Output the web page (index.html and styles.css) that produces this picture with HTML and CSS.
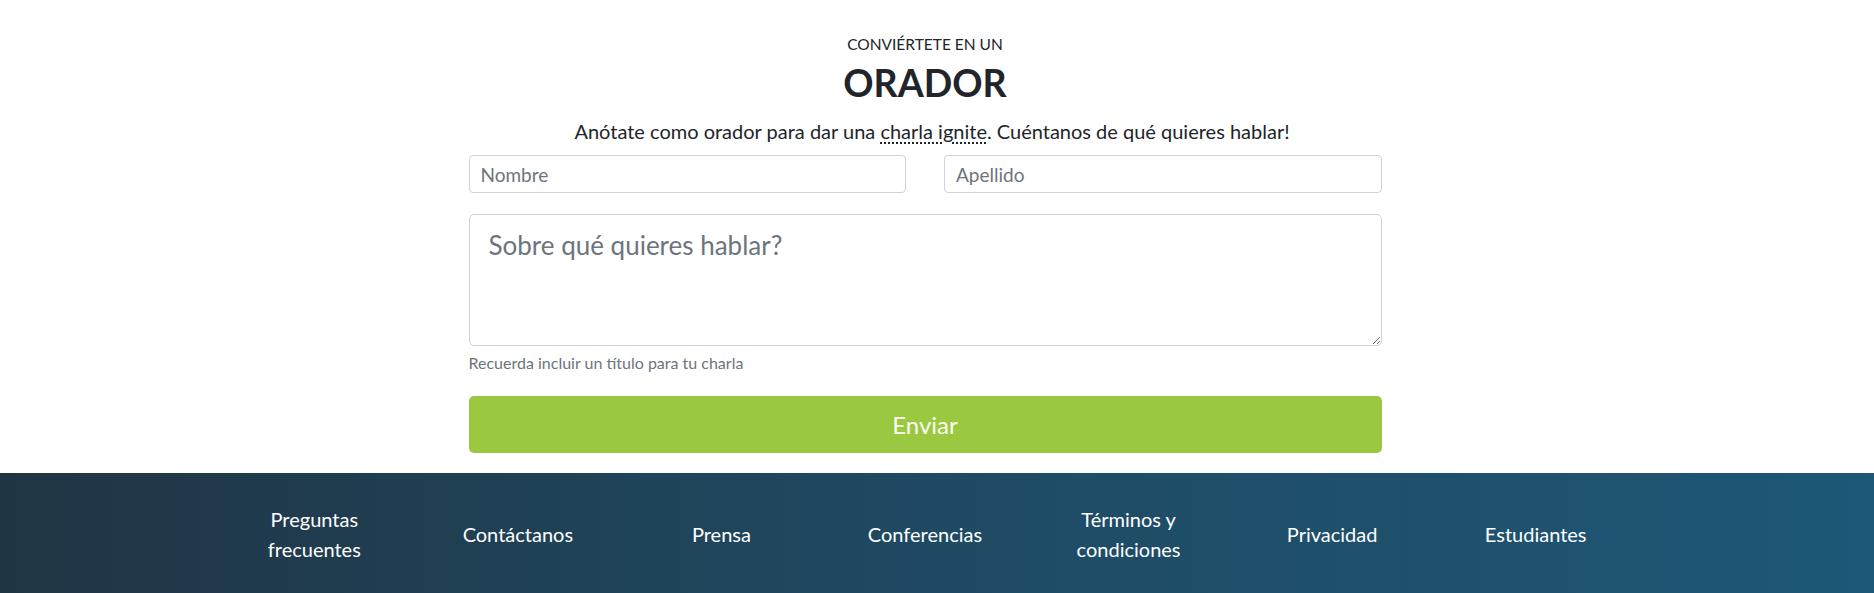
FILE: index.html
```html
<!DOCTYPE html>
<html lang="es">
<head>
<meta charset="utf-8">
<title>Conviértete en un orador</title>
<link rel="stylesheet" href="styles.css">
</head>
<body>
<main class="page">
  <section class="speaker">
    <p class="kicker">CONVIÉRTETE EN UN</p>
    <h1 class="title">ORADOR</h1>
    <p class="lead">Anótate como orador para dar una <abbr title="charla ignite">charla ignite</abbr>. Cuéntanos de qué quieres hablar!</p>
    <form class="form">
      <div class="row">
        <input class="field" type="text" placeholder="Nombre">
        <input class="field" type="text" placeholder="Apellido">
      </div>
      <textarea class="area" placeholder="Sobre qué quieres hablar?"></textarea>
      <small class="hint">Recuerda incluir un título para tu charla</small>
      <button class="send" type="button">Enviar</button>
    </form>
  </section>
</main>
<footer class="footer">
  <nav class="links">
    <a href="#">Preguntas frecuentes</a>
    <a href="#">Contáctanos</a>
    <a href="#">Prensa</a>
    <a href="#">Conferencias</a>
    <a href="#">Términos y condiciones</a>
    <a href="#">Privacidad</a>
    <a href="#">Estudiantes</a>
  </nav>
</footer>
</body>
</html>
```

FILE: styles.css
```css
* { box-sizing: border-box; }
html, body { margin: 0; padding: 0; }
body {
  font-family: Lato, "Open Sans", "Liberation Sans", sans-serif;
  color: #212529;
  background: #fff;
}
.page {
  padding-right: 24px;
}
.speaker {
  width: 913px;
  margin: 0 auto;
  padding-top: 32px;
  text-align: center;
}
.kicker {
  margin: 0;
  font-size: 15.5px;
  line-height: 24px;
}
.title {
  margin: 3px 0 0;
  font-size: 37.5px;
  line-height: 48px;
  font-weight: 700;
}
.lead {
  margin: 9px 0 0;
  padding-left: 14px;
  font-size: 20px;
  line-height: 30px;
}
abbr[title] {
  text-decoration: underline dotted;
  text-underline-offset: 3px;
  cursor: help;
}
.form {
  margin-top: 9px;
  display: flex;
  flex-direction: column;
  text-align: left;
}
.row {
  display: grid;
  grid-template-columns: 1fr 1fr;
  column-gap: 38px;
}
.field {
  height: 38px;
  padding: 0 11px;
  border: 1px solid #ced4da;
  border-radius: 4px;
  font-family: inherit;
  font-size: 19px;
  color: #495057;
  background: #fff;
}
.area {
  margin-top: 21px;
  height: 132px;
  padding: 11px 19px;
  border: 1px solid #ced4da;
  border-radius: 5px;
  font-family: inherit;
  font-size: 26px;
  line-height: 38px;
  color: #495057;
  resize: vertical;
}
.field::placeholder, .area::placeholder { color: #6c757d; opacity: 1; }
.hint {
  margin-top: 6px;
  font-size: 16px;
  line-height: 22px;
  color: #6c757d;
}
.send {
  margin-top: 22px;
  height: 57px;
  border: 0;
  border-radius: 5px;
  background: #9ac840;
  color: #fbfff3;
  font-family: inherit;
  font-size: 24px;
  cursor: pointer;
}
.footer {
  margin-top: 20px;
  background: linear-gradient(to right, #203544, #1f4a63 50%, #1e5777);
  padding: 31px 24px 30px 0;
}
.links {
  width: 1425px;
  margin: 0 auto;
  display: grid;
  grid-template-columns: repeat(7, 1fr);
  align-items: center;
  min-height: 60px;
}
.links a {
  padding: 0 16px;
  text-align: center;
  color: #fff;
  text-decoration: none;
  font-size: 20px;
  line-height: 30px;
}
```
